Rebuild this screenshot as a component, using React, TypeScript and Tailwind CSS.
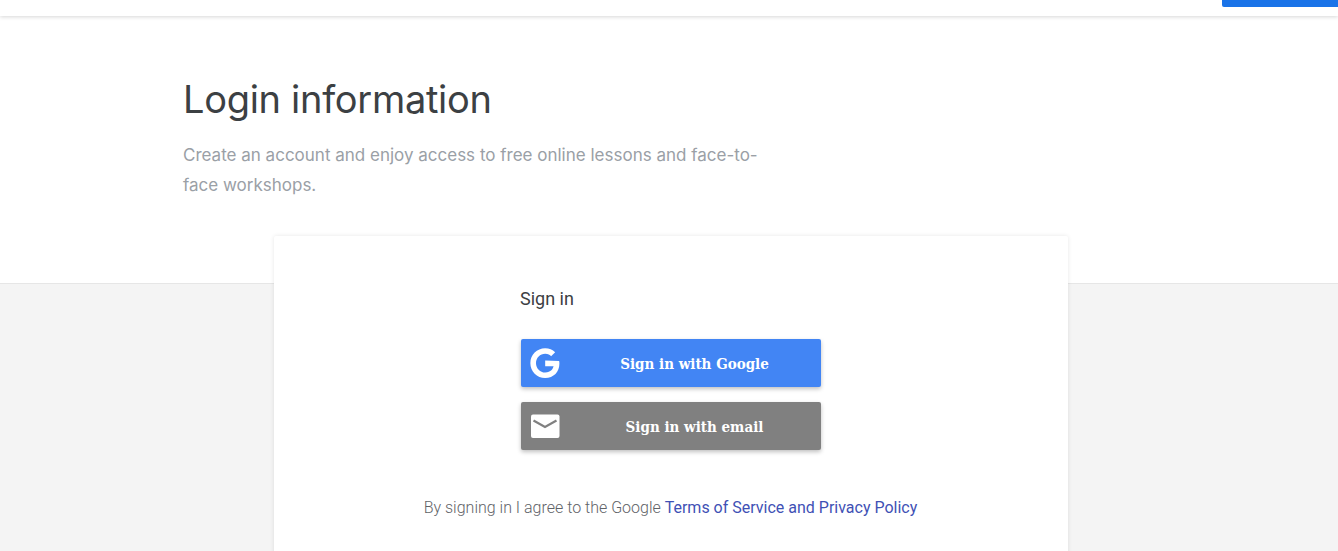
function GoogleIcon() {
  return (
    <svg width="30" height="30" viewBox="3.500 3 41.500 41.500" fill="#fff">
      <path d="M24.500 20.300v8h11.600c-.5 2.900-3.600 8.600-11.600 8.600-7 0-12.700-5.800-12.700-12.900S17.500 11.100 24.500 11.100c4 0 6.700 1.700 8.200 3.200l5.600-5.400C34.700 5.500 30 3.500 24.500 3.500 13.100 3.500 4 12.600 4 24s9.100 20.500 20.500 20.500c11.800 0 19.700-8.300 19.700-20 0-1.400-.2-2.400-.4-3.400z" />
    </svg>
  )
}

function MailIcon() {
  return (
    <svg width="30" height="25" viewBox="0 0 30 25">
      <rect x="1" y="0.500" width="28.500" height="23.500" rx="2" fill="#fff" />
      <path d="M3.500 6.500 15 13l11.500-6.500" fill="none" stroke="#808080" strokeWidth="2.200" />
    </svg>
  )
}

function App() {
  return (
    <div className="h-[551px] overflow-hidden bg-[#f4f4f4] font-['Roboto',sans-serif]">
      {/* Top bar */}
      <header className="relative z-10 flex h-4 justify-end bg-white shadow-[0_1px_4px_rgba(0,0,0,0.16)]">
        <div className="h-[7px] w-[116px] rounded-bl-[2px] bg-[#1a73e8]" />
      </header>

      {/* Hero */}
      <section className="h-[268px] border-b border-[#e6e6e6] bg-white pl-[183px] pt-[56px]">
        <h1 className="font-['Inter',sans-serif] text-[38px] leading-[54px] tracking-[-0.3px] text-[#3c4043]">Login information</h1>
        <p className="mt-[14px] w-[580px] font-['Inter',sans-serif] text-[17px] leading-[30px] text-[#9aa0a6]">
          Create an account and enjoy access to free online lessons and face-to-face workshops.
        </p>
      </section>

      {/* Card */}
      <main className="relative -mt-[48px] ml-[274px] h-[400px] w-[794px] rounded-[2px] bg-white pt-[52px] shadow-[0_0_4px_rgba(0,0,0,0.1)]">
        <div className="ml-[247px] w-[300px]">
          <h2 className="-ml-px text-[18px] leading-[22px] text-[#3c4043]">Sign in</h2>
          <div className="mt-[29px] flex flex-col gap-[15px]">
            <button className="flex h-[48px] items-center rounded-[2px] bg-[#4285f4] pl-[9px] shadow-[0_2px_4px_rgba(0,0,0,0.25)]">
              <GoogleIcon />
              <span className="flex-1 pl-[8px] pt-[3px] font-['DejaVu_Serif_Condensed','DejaVu_Serif',serif] text-[15px] font-bold text-white">Sign in with Google</span>
            </button>
            <button className="flex h-[48px] items-center rounded-[2px] bg-[#808080] pl-[9px] shadow-[0_2px_4px_rgba(0,0,0,0.25)]">
              <MailIcon />
              <span className="flex-1 pl-[8px] pt-[3px] font-['DejaVu_Serif_Condensed','DejaVu_Serif',serif] text-[15px] font-bold text-white">Sign in with email</span>
            </button>
          </div>
        </div>
        <p className="mt-[47px] pr-[1px] text-center text-[16px] font-light leading-[22px] text-[#5f6368]">
          By signing in I agree to the Google <a className="font-normal text-[#3f51b5]">Terms of Service and Privacy Policy</a>
        </p>
      </main>
    </div>
  )
}

export default App
